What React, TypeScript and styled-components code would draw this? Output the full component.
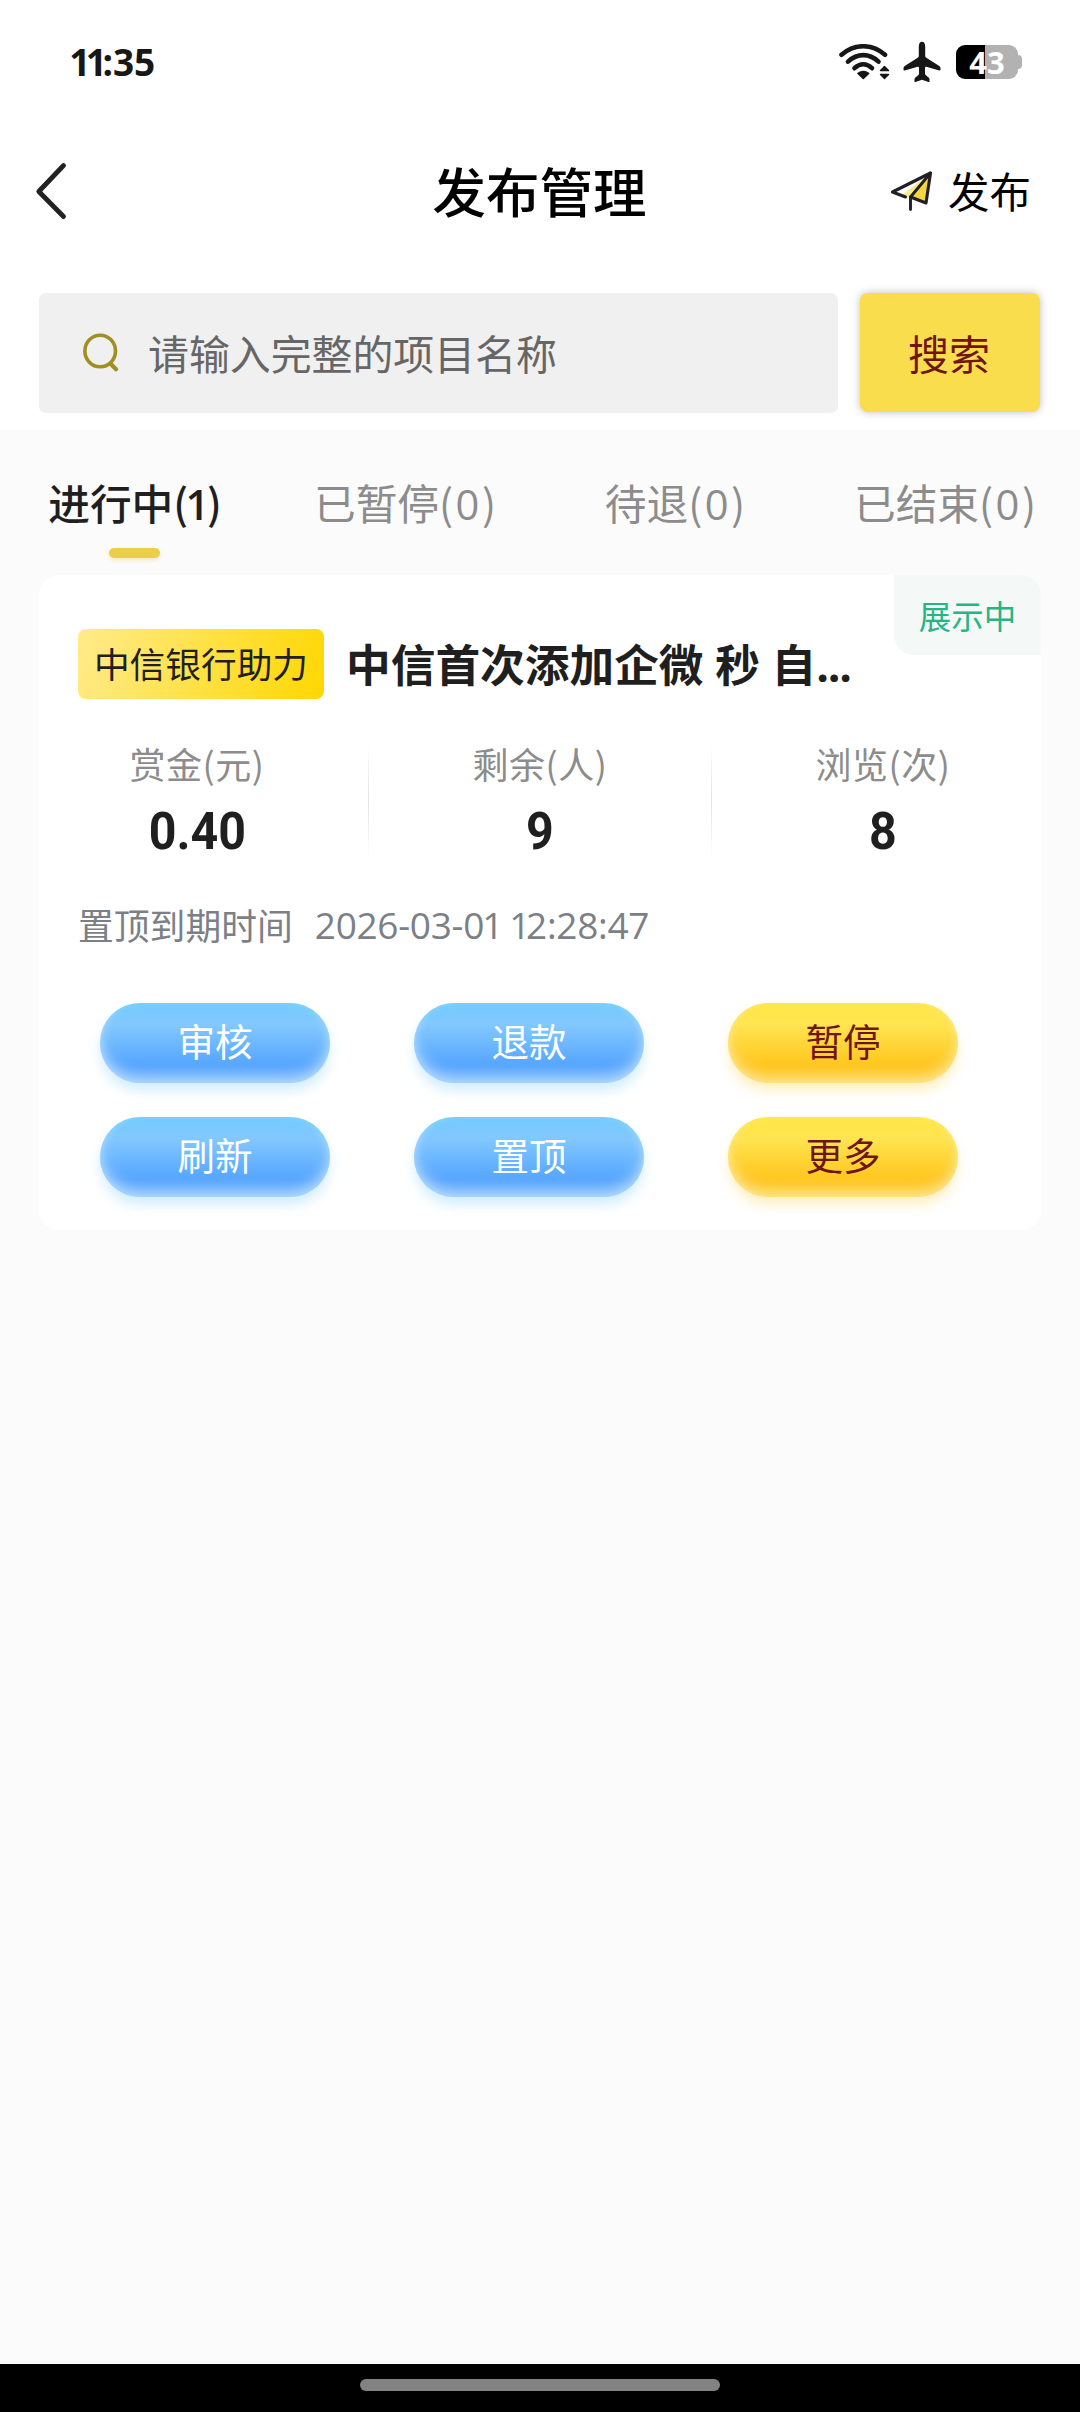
import React from "react";
import styled, { createGlobalStyle, css } from "styled-components";

const GlobalStyle = createGlobalStyle`
  * { box-sizing: border-box; }
  body {
    margin: 0;
    background: #fbfbfb;
    font-family: "Noto Sans CJK SC", "Noto Sans", sans-serif;
    -webkit-font-smoothing: antialiased;
  }
  button { border: 0; margin: 0; padding: 0; font-family: inherit; }
`;

const Screen = styled.div`
  width: 1080px;
  height: 2412px;
  display: flex;
  flex-direction: column;
  background: #fbfbfb;
  overflow: hidden;
`;

const Header = styled.header`
  height: 430px;
  flex: none;
  background: #fff;
  display: flex;
  flex-direction: column;
`;

const StatusBar = styled.div`
  height: 123px;
  padding: 0 58px 0 71px;
  display: flex;
  align-items: center;
  justify-content: space-between;
`;

const Clock = styled.span`
  font: 700 37px/40px "Open Sans", sans-serif;
  letter-spacing: -0.2px;
  color: #171717;
`;

const NarrowOnes = styled.span`
  margin-left: -0.05em;
  letter-spacing: -0.12em;
`;

const StatusIcons = styled.div`
  display: flex;
  align-items: center;
  gap: 12px;
`;

const Battery = styled.div`
  width: 62px;
  height: 34px;
  border-radius: 9px;
  background: linear-gradient(90deg, #000 29px, #b2b2b2 29px);
  color: #fff;
  font: 700 31px/34px "Open Sans", sans-serif;
  text-align: center;
`;

const BatteryWrap = styled.div`
  display: flex;
  align-items: center;
  margin-left: 3px;
`;

const Nub = styled.i`
  width: 4px;
  height: 14px;
  background: #b2b2b2;
  border-radius: 0 4px 4px 0;
`;

const NavBar = styled.nav`
  height: 136px;
  padding: 0 49px 0 34px;
  display: grid;
  grid-template-columns: 1fr auto 1fr;
  align-items: center;
`;

const BackButton = styled.button`
  width: 34px;
  height: 60px;
  background: none;
  svg { display: block; }
`;

const PageTitle = styled.h1`
  margin: 0 0 2px 14px;
  font-size: 53.5px;
  line-height: 64px;
  font-weight: 500;
  color: #000;
`;

const PublishLink = styled.div`
  justify-self: end;
  display: flex;
  align-items: center;
  gap: 14px;
  font-size: 41.5px;
  line-height: 50px;
  color: #000;
  span { margin-top: -3px; }
`;

const SearchRow = styled.div`
  margin-top: 34px;
  padding: 0 40px 0 39px;
  display: flex;
  gap: 22px;
`;

const SearchField = styled.div`
  flex: 1;
  height: 120px;
  border-radius: 7px;
  background: #f0f0f0;
  display: flex;
  align-items: center;
  padding-left: 43px;
  gap: 26px;
  color: #666;
  font-size: 40.9px;
  line-height: 50px;
  span { margin-top: -1px; }
`;

const SearchButton = styled.button`
  width: 180px;
  height: 119px;
  border-radius: 8px;
  background: #fadd4c;
  box-shadow: 0 0 9px rgba(0, 0, 0, 0.26);
  color: #701515;
  font-size: 41px;
  line-height: 50px;
  padding: 0 2px 2px 0;
`;

const Tabs = styled.div`
  height: 145px;
  flex: none;
  display: grid;
  grid-template-columns: repeat(4, 1fr);
`;

const Tab = styled.div<{ $active?: boolean }>`
  display: flex;
  flex-direction: column;
  align-items: center;
  padding-top: 47px;
  font-size: 41.7px;
  line-height: 50px;
  font-weight: ${(p) => (p.$active ? 500 : 400)};
  color: ${(p) => (p.$active ? "#1f1f1f" : "#8c8c8c")};
  white-space: nowrap;
`;

const Count = styled.span<{ $bold?: boolean }>`
  font-family: "Open Sans", sans-serif;
  font-weight: ${(p) => (p.$bold ? 600 : 400)};
  margin: 0 ${(p) => (p.$bold ? "-2.5px" : "2.5px")};
`;

const TabLine = styled.i`
  width: 51px;
  height: 10px;
  margin-top: 19px;
  margin-right: 2px;
  border-radius: 5px;
  background: #ebcf47;
  box-shadow: 0 2px 4px rgba(235, 207, 71, 0.4);
`;

const Card = styled.section`
  position: relative;
  margin: 0 39px;
  height: 655px;
  flex: none;
  padding: 54px 39px 0;
  border-radius: 20px;
  background: #fff;
`;

const StateBadge = styled.div`
  position: absolute;
  top: 0;
  right: 0;
  width: 147px;
  height: 80px;
  border-radius: 0 20px 0 20px;
  background: #f4f9f8;
  color: #27b586;
  font-size: 32.5px;
  line-height: 80px;
  text-align: center;
`;

const TitleRow = styled.div`
  display: flex;
  align-items: center;
  gap: 22px;
  height: 70px;
`;

const SourceTag = styled.div`
  width: 246px;
  height: 70px;
  border-radius: 8px;
  background: linear-gradient(108deg, #ffeb8c, #ffd700);
  color: #1f1f1f;
  font-size: 35.7px;
  line-height: 68px;
  text-align: center;
`;

const ItemTitle = styled.h2`
  margin: 0;
  font-size: 44.7px;
  line-height: 70px;
  font-weight: 600;
  color: #1f1f1f;
  white-space: nowrap;
  word-spacing: 1.5px;
`;

const Dots = styled.span`
  font-family: "Open Sans", sans-serif;
  font-weight: 700;
  letter-spacing: -1.2px;
`;

const Stats = styled.div`
  margin: 39px -52px 0;
  display: grid;
  grid-template-columns: repeat(3, 343px);
  justify-content: center;
`;

const Stat = styled.div`
  height: 128px;
  display: flex;
  flex-direction: column;
  align-items: center;
  background: linear-gradient(180deg, #fff, #e2e2e2 50%, #fff) right 5px / 1px 115px no-repeat;
  &:last-child { background: none; }
`;

const StatLabel = styled.div`
  font-size: 36px;
  line-height: 50px;
  letter-spacing: 0.5px;
  color: #8c8c8c;
`;

const StatValue = styled.div`
  margin-top: 14px;
  font: 700 52px/60px Roboto, sans-serif;
  color: #1f1f1f;
  transform: scaleX(0.93);
`;

const ExpireRow = styled.div`
  margin-top: 33px;
  display: flex;
  align-items: center;
  gap: 22px;
  height: 50px;
  font-size: 35.8px;
  line-height: 50px;
  color: #7b7f86;
`;

const ExpireTime = styled.span`
  margin-top: 1px;
  font-family: "Open Sans", sans-serif;
  font-size: 37px;
  letter-spacing: -0.3px;
  word-spacing: 3px;
`;

const Actions = styled.div`
  margin: 54px 0 0 22px;
  display: grid;
  grid-template-columns: repeat(3, 230px);
  gap: 34px 84px;
`;

const blue = css`
  color: #fff;
  background: linear-gradient(180deg, #72ccff 0%, #82c8ff 27%, #55a5ff 78%, #55a5ff 100%);
  box-shadow: 0 8px 12px rgba(110, 200, 255, 0.3),
    inset 0 -8px 13px rgba(255, 255, 255, 0.5), inset 0 0 8px rgba(130, 210, 255, 0.5);
`;

const yellow = css`
  color: #701515;
  background: linear-gradient(180deg, #ffe845 0%, #ffe450 27%, #ffc51c 80%, #ffc51c 100%);
  box-shadow: 0 8px 12px rgba(255, 205, 60, 0.3),
    inset 0 -8px 13px rgba(255, 245, 215, 0.55), inset 0 0 8px rgba(255, 230, 120, 0.5);
`;

const ActionButton = styled.button<{ $tone: "blue" | "yellow" }>`
  height: 80px;
  border-radius: 40px;
  font-size: 37.5px;
  line-height: 50px;
  padding-bottom: 6px;
  ${(p) => (p.$tone === "blue" ? blue : yellow)}
`;

const Spacer = styled.div`
  flex: 1;
`;

const GestureBar = styled.div`
  height: 48px;
  flex: none;
  background: #000;
  display: flex;
  justify-content: center;
  padding-top: 15px;
`;

const Pill = styled.i`
  width: 360px;
  height: 12px;
  border-radius: 6px;
  background: #828282;
`;

const WifiIcon = () => (
  <svg width="52" height="36" viewBox="0 0 52 36" fill="none" stroke="#171717" strokeWidth="4.6" strokeLinecap="round">
    <path d="M2.5 10.8C15.5-.6 33-.6 46 10.8" />
    <path d="M9 17.6C18.5 9 30 9 39.5 17.6" />
    <path d="M15.5 24.2C21 19 27.500 19 33 24.200" />
    <path d="M19 29.500Q24.300 25.800 29.600 29.500L24.300 34.500Z" fill="#171717" stroke="#171717" strokeWidth="1.600" strokeLinejoin="round" />
    <path d="M45.500 22.500L49.500 26.500H41.500ZM45.500 34.500L41.500 30.500H49.500Z" fill="#171717" strokeWidth="1.400" strokeLinejoin="round" />
  </svg>
);

const PlaneIcon = () => (
  <svg width="38" height="42" viewBox="0 0 38 42" fill="#171717">
    <path d="M19 .8c2 0 3.200 1.800 3.200 4.600v9.400c0 .9.400 1.500 1.100 2l13 8.200c.8.500 1.200 1.200 1.200 2v1.600c0 .7-.5 1-1.200.8l-13-3.600c-.8-.2-1.300.2-1.300 1v5.600c0 .8.300 1.400.9 1.900l2.700 2.300c.6.500.9 1.100.9 1.800v2c0 .7-.4.900-1 .7L19 38.700l-6.500 2.400c-.6.200-1 0-1-.7v-2c0-.7.300-1.300.9-1.800l2.700-2.300c.6-.5.9-1.100.9-1.900v-5.600c0-.8-.5-1.200-1.300-1l-13 3.600c-.7.200-1.200-.1-1.200-.8V27c0-.8.400-1.500 1.200-2l13-8.200c.7-.5 1.100-1.100 1.100-2V5.400C15.800 2.600 17 .8 19 .8Z" />
  </svg>
);

const BackIcon = () => (
  <svg width="34" height="60" viewBox="0 0 34 60" fill="none" stroke="#222" strokeWidth="4.800" strokeLinecap="round" strokeLinejoin="round">
    <path d="M29.500 4.500L4.800 30.500L29.500 55.500" />
  </svg>
);

const SendIcon = () => (
  <svg width="44" height="42" viewBox="0 0 44 42" fill="none" strokeLinejoin="round" strokeLinecap="round">
    <path d="M40.500 3L20.500 27L36 33Z" fill="#f6d53f" />
    <path d="M40.500 3L12 25L19 28Z" fill="#fbe88c" />
    <path d="M15.500 27L2.500 22L40.500 3L36 33L20.500 27" stroke="#1f1f27" strokeWidth="3.100" />
    <path d="M40.500 3L20.500 27V39.500" stroke="#1f1f27" strokeWidth="2.900" />
  </svg>
);

const SearchIcon = () => (
  <svg width="40" height="40" viewBox="0 0 40 40" fill="none" stroke="#a08f22" strokeWidth="3.600" strokeLinecap="round">
    <ellipse cx="18.200" cy="18" rx="15.300" ry="15.800" />
    <path d="M28.800 31L34 36.200" strokeWidth="4.200" />
  </svg>
);

/* Sets runs of the digit 1 tighter than the tabular figures around them. */
const Figures = ({ text }: { text: string }) => (
  <>
    {text.split(/(1+)/).map((run, i) =>
      run.startsWith("1") ? <NarrowOnes key={i}>{run}</NarrowOnes> : run
    )}
  </>
);

const tabs = [
  { name: "进行中", count: 1 },
  { name: "已暂停", count: 0 },
  { name: "待退", count: 0 },
  { name: "已结束", count: 0 },
];

const stats = [
  { label: "赏金(元)", value: "0.40" },
  { label: "剩余(人)", value: "9" },
  { label: "浏览(次)", value: "8" },
];

const actions: { label: string; tone: "blue" | "yellow" }[] = [
  { label: "审核", tone: "blue" },
  { label: "退款", tone: "blue" },
  { label: "暂停", tone: "yellow" },
  { label: "刷新", tone: "blue" },
  { label: "置顶", tone: "blue" },
  { label: "更多", tone: "yellow" },
];

export default function App() {
  return (
    <Screen>
      <GlobalStyle />
      <Header>
        <StatusBar>
          <Clock>
            <Figures text="11:35" />
          </Clock>
          <StatusIcons>
            <WifiIcon />
            <PlaneIcon />
            <BatteryWrap>
              <Battery>43</Battery>
              <Nub />
            </BatteryWrap>
          </StatusIcons>
        </StatusBar>
        <NavBar>
          <BackButton aria-label="返回">
            <BackIcon />
          </BackButton>
          <PageTitle>发布管理</PageTitle>
          <PublishLink>
            <SendIcon />
            <span>发布</span>
          </PublishLink>
        </NavBar>
        <SearchRow>
          <SearchField>
            <SearchIcon />
            <span>请输入完整的项目名称</span>
          </SearchField>
          <SearchButton>搜索</SearchButton>
        </SearchRow>
      </Header>
      <Tabs>
        {tabs.map((t, i) => (
          <Tab key={t.name} $active={i === 0}>
            <span>
              {t.name}(<Count $bold={i === 0}>{t.count}</Count>)
            </span>
            {i === 0 && <TabLine />}
          </Tab>
        ))}
      </Tabs>
      <Card>
        <StateBadge>展示中</StateBadge>
        <TitleRow>
          <SourceTag>中信银行助力</SourceTag>
          <ItemTitle>
            中信首次添加企微 秒 自<Dots>...</Dots>
          </ItemTitle>
        </TitleRow>
        <Stats>
          {stats.map((s) => (
            <Stat key={s.label}>
              <StatLabel>{s.label}</StatLabel>
              <StatValue>{s.value}</StatValue>
            </Stat>
          ))}
        </Stats>
        <ExpireRow>
          <span>置顶到期时间</span>
          <ExpireTime>
            <Figures text="2026-03-01 12:28:47" />
          </ExpireTime>
        </ExpireRow>
        <Actions>
          {actions.map((a) => (
            <ActionButton key={a.label} $tone={a.tone}>
              {a.label}
            </ActionButton>
          ))}
        </Actions>
      </Card>
      <Spacer />
      <GestureBar>
        <Pill />
      </GestureBar>
    </Screen>
  );
}
